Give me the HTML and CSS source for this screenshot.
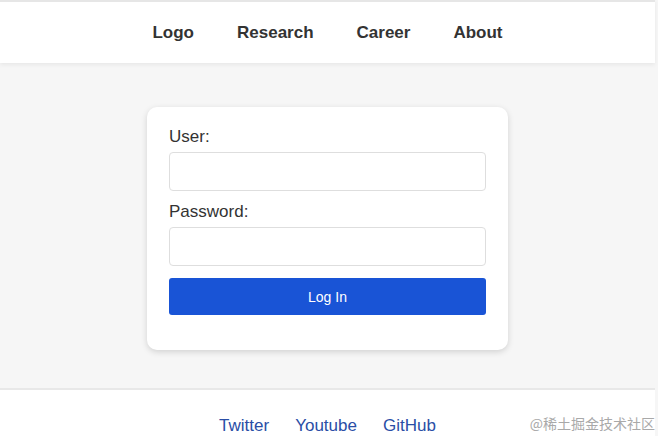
FILE: index.html
```html
<!DOCTYPE html>
<html lang="en">
<head>
  <meta charset="UTF-8">
  <meta name="viewport" content="width=device-width, initial-scale=1.0">
  <title>Login</title>
  <link rel="stylesheet" href="styles.css">
</head>
<body>
  <header class="header">
    <nav class="nav">
      <a href="#">Logo</a>
      <a href="#">Research</a>
      <a href="#">Career</a>
      <a href="#">About</a>
    </nav>
  </header>

  <main class="main">
    <form class="login-card">
      <label for="user">User:</label>
      <input type="text" id="user">
      <label for="password">Password:</label>
      <input type="password" id="password">
      <button type="button">Log In</button>
    </form>
  </main>

  <footer class="footer">
    <a href="#">Twitter</a>
    <a href="#">Youtube</a>
    <a href="#">GitHub</a>
  </footer>

  <span class="watermark">@稀土掘金技术社区</span>
</body>
</html>
```

FILE: styles.css
```css
body {
  font-family: "Liberation Sans", Arial, sans-serif;
  margin: 0;
  padding-right: 3px;
  background: #f6f6f6;
  color: #333;
  height: 436px;
  overflow: hidden;
  position: relative;
}
.header {
  background: #fff;
  border-top: 2px solid #e6e6e6;
  height: 61px;
  box-shadow: 0 2px 4px rgba(0, 0, 0, 0.06);
  display: flex;
  justify-content: center;
  align-items: center;
  position: relative;
}
.nav {
  display: flex;
  gap: 43px;
}
.nav a {
  color: #333;
  text-decoration: none;
  font-weight: bold;
  font-size: 17px;
}
.main {
  height: 325px;
  padding-top: 44px;
  box-sizing: border-box;
  display: flex;
  justify-content: center;
}
.login-card {
  width: 361px;
  height: 243px;
  box-sizing: border-box;
  background: #fff;
  border-radius: 10px;
  box-shadow: 0 2px 6px rgba(0, 0, 0, 0.15);
  padding: 20px 22px 0;
  display: flex;
  flex-direction: column;
}
.login-card label {
  font-size: 17px;
  line-height: 20px;
  margin-bottom: 5px;
}
.login-card input {
  height: 39px;
  box-sizing: border-box;
  border: 1px solid #dedede;
  border-radius: 4px;
  margin-bottom: 11px;
  font-size: 15px;
  padding: 0 10px;
}
.login-card button {
  margin-top: 1px;
  height: 37px;
  border: none;
  border-radius: 3px;
  background: #1954d6;
  color: #fff;
  font-family: inherit;
  font-size: 14px;
}
.footer {
  background: #fff;
  border-top: 2px solid #e8e8e8;
  height: 46px;
  display: flex;
  justify-content: center;
  align-items: flex-end;
  gap: 26px;
}
.footer a {
  color: #2a4ea6;
  text-decoration: none;
  font-size: 17px;
  line-height: 19px;
  margin-bottom: 1px;
}
.watermark {
  position: absolute;
  right: 3px;
  bottom: 3px;
  font-family: "Noto Sans CJK SC", serif;
  font-size: 14px;
  color: #a9a9a9;
}
```
